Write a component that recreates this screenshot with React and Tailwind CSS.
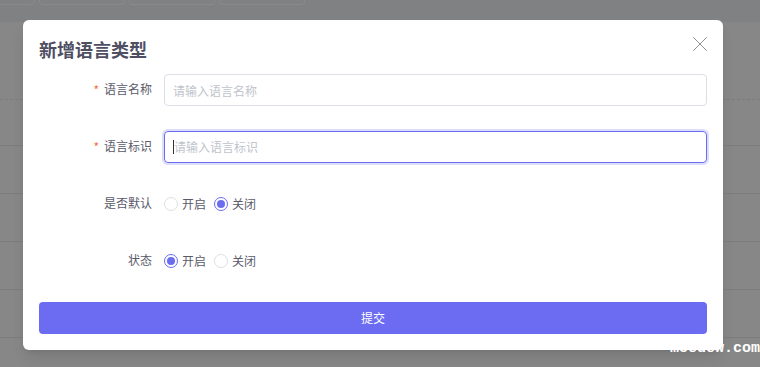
import { X } from "lucide-react";

const cjk = { fontFamily: '"Noto Sans CJK SC", "Noto Sans", sans-serif' };

function Radio({ checked, label }) {
  return (
    <label className="flex items-center gap-1 cursor-pointer">
      <span
        className={
          checked
            ? "w-[14px] h-[14px] rounded-full border border-[#6b6cf0] flex items-center justify-center"
            : "w-[14px] h-[14px] rounded-full border border-[#dcdfe6] bg-white"
        }
      >
        {checked && <span className="w-[8px] h-[8px] rounded-full bg-[#6b6cf0]" />}
      </span>
      <span className="text-[12px] text-[#5a5a6b]">{label}</span>
    </label>
  );
}

function Row({ label, required, children }) {
  return (
    <div className="flex items-center h-8">
      <div className="w-[113px] flex justify-end items-center gap-[5px] text-[12px] text-[#5a5a6b] -mt-0.5">
        {required && <span className="text-[#f56c3c] text-[12px] leading-none mt-0.5">*</span>}
        <span>{label}</span>
      </div>
      <div className="flex-1 ml-3 flex items-center gap-2 h-full">{children}</div>
    </div>
  );
}

export default function App() {
  return (
    <div className="relative w-[760px] h-[367px] overflow-hidden bg-[#878787]" style={cjk}>
      {/* backdrop page */}
      <div className="h-[22px] bg-[#808183] flex gap-1 items-start">
        <div className="w-[35px] h-[5px] border-r border-b border-[#8a8a8c] rounded-br" />
        <div className="w-[86px] h-[5px] border-x border-b border-[#8a8a8c] rounded-b" />
        <div className="w-[86px] h-[5px] border-x border-b border-[#8a8a8c] rounded-b" />
        <div className="w-[86px] h-[5px] border-x border-b border-[#8a8a8c] rounded-b" />
      </div>
      <div className="h-[78px] border-b border-dashed border-[#7c7c7c]" />
      <div className="h-[46px] border-b border-[#7c7c7c]" />
      <div className="h-[48px] border-b border-[#7c7c7c]" />
      <div className="h-[48px] border-b border-[#7c7c7c]" />
      <div className="h-[48px] border-b border-[#7c7c7c]" />
      <div className="h-[48px] border-b border-[#7c7c7c]" />

      {/* dialog */}
      <div className="absolute left-[23px] top-[20px] w-[700px] h-[330px] bg-white rounded-md shadow-lg px-4 pt-4 pb-4 flex flex-col">
        <div className="flex items-center justify-between h-[26px]">
          <h2 className="text-[18px] font-bold text-[#4f4f63] leading-none">新增语言类型</h2>
          <X className="w-[26px] h-[26px] text-[#8e8e8e] -mr-[6px] -mt-[10px]" strokeWidth={0.9} />
        </div>

        <div className="mt-3 flex flex-col gap-[25px]">
          <Row label="语言名称" required>
            <input
              className="w-full h-8 border border-[#dcdfe6] rounded px-2 text-[12px] outline-none placeholder:text-[#c0c4cc]"
              placeholder="请输入语言名称"
            />
          </Row>
          <Row label="语言标识" required>
            <div className="w-full h-8 border border-[#6b6cf0] rounded ring-2 ring-[#dcdcfb] px-2 flex items-center text-[12px]">
              <span className="w-px h-[14px] bg-[#333]" />
              <span className="text-[#c0c4cc]">请输入语言标识</span>
            </div>
          </Row>
          <Row label="是否默认">
            <Radio label="开启" />
            <Radio label="关闭" checked />
          </Row>
          <Row label="状态">
            <Radio label="开启" checked />
            <Radio label="关闭" />
          </Row>
        </div>

        <button className="mt-[25px] h-8 w-full rounded bg-[#6b6cf1] text-white text-[12px]">
          提交
        </button>
      </div>

      <div
        className="absolute right-0 top-[341px] text-white text-[15px] font-bold leading-none"
        style={{ fontFamily: '"Liberation Mono", monospace' }}
      >
        moedew.com
      </div>
    </div>
  );
}
